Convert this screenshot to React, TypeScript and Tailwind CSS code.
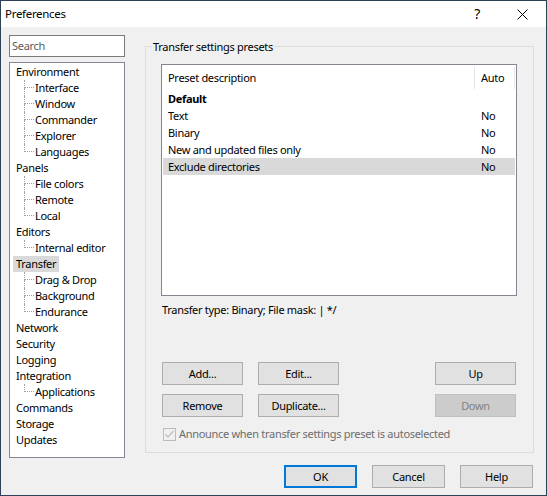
import type { ReactNode } from "react";

// Preferences dialog (WinSCP style) - Transfer page

type TreeNode = { label: string; children?: string[]; selected?: boolean };

const tree: TreeNode[] = [
  { label: "Environment", children: ["Interface", "Window", "Commander", "Explorer", "Languages"] },
  { label: "Panels", children: ["File colors", "Remote", "Local"] },
  { label: "Editors", children: ["Internal editor"] },
  { label: "Transfer", selected: true, children: ["Drag & Drop", "Background", "Endurance"] },
  { label: "Network" },
  { label: "Security" },
  { label: "Logging" },
  { label: "Integration", children: ["Applications"] },
  { label: "Commands" },
  { label: "Storage" },
  { label: "Updates" },
];

const presets = [
  { name: "Text", auto: "No" },
  { name: "Binary", auto: "No" },
  { name: "New and updated files only", auto: "No" },
  { name: "Exclude directories", auto: "No", selected: true },
];

function Button({ children, disabled, primary, className }: { children: ReactNode; disabled?: boolean; primary?: boolean; className?: string }) {
  let cls = "h-[23px] flex items-center justify-center border ";
  if (disabled) cls += "bg-[#cccccc] border-[#bfbfbf] text-[#838383]";
  else if (primary) cls += "bg-[#e1e1e1] border-2 border-[#0078d7] text-black";
  else cls += "bg-[#e1e1e1] border-[#adadad] text-black";
  return <div className={cls + " " + (className ?? "")}>{children}</div>;
}

function ChildRow({ label, last }: { label: string; last: boolean }) {
  return (
    <div className="flex h-4 items-center">
      <div className="w-[14px] shrink-0" />
      <div className="flex h-4 w-[10px] shrink-0 flex-col">
        <div className="h-[8px] border-b border-l border-dotted border-[#a0a0a0]" />
        <div className={"h-[8px] " + (last ? "" : "border-l border-dotted border-[#a0a0a0]")} />
      </div>
      <span className="ml-[1px] whitespace-nowrap">{label}</span>
    </div>
  );
}

export default function App() {
  return (
    <div className="flex h-[496px] w-[547px] flex-col border border-[#2b4257] bg-[#f0f0f0] font-['Noto_Sans',sans-serif] text-[11px] leading-4 tracking-[-0.3px] text-black">
      {/* title bar */}
      <div className="flex h-[26px] shrink-0 items-center bg-white">
        <span className="pl-[4px] text-[11.5px]">Preferences</span>
        <span className="ml-auto mr-[37px] text-[14px]">?</span>
        <svg width="11" height="11" viewBox="0 0 11 11" className="mr-[18px]">
          <path d="M0.5 0.5 L10.5 10.5 M10.5 0.5 L0.5 10.5" stroke="#000" strokeWidth="1" />
        </svg>
      </div>

      <div className="flex pl-[8px] pt-[8px]">
        {/* left column */}
        <div className="flex w-[116px] shrink-0 flex-col">
          <div className="flex h-[22px] items-center border border-[#7a7a7a] bg-white pl-[2px] text-[#5a5a5a]">Search</div>
          <div className="mt-[5px] h-[396px] border border-[#828790] bg-white pt-[1px]">
            {tree.map((n) => (
              <div key={n.label}>
                <div className="flex h-4 items-center pl-[3px]">
                  <span className={"px-[3px] " + (n.selected ? "bg-[#d9d9d9]" : "")}>{n.label}</span>
                </div>
                {n.children?.map((c, i) => (
                  <ChildRow key={c} label={c} last={i === n.children!.length - 1} />
                ))}
              </div>
            ))}
          </div>
        </div>

        {/* group box */}
        <div className="ml-[20px] mt-[11px] flex h-[407px] w-[389px] flex-col border border-[#dcdcdc]">
          <div className="-mt-[8px] ml-[6px] w-fit bg-[#f0f0f0] px-[1px]">Transfer settings presets</div>

          <div className="ml-[15px] mt-[9px] h-[232px] w-[356px] border border-[#828790] bg-white pl-[1px]">
            <div className="flex h-[25px] items-center">
              <div className="w-[311px] pl-[5px]">Preset description</div>
              <div className="h-[22px] w-px bg-[#e5e5e5]" />
              <div className="w-[39px] pl-[6px]">Auto</div>
              <div className="h-[22px] w-px bg-[#e5e5e5]" />
            </div>
            <div className="flex h-[17px] w-[352px] items-center pl-[5px] font-bold">Default</div>
            {presets.map((p) => (
              <div key={p.name} className={"flex h-[17px] w-[352px] items-center " + (p.selected ? "bg-[#d9d9d9]" : "")}>
                <div className="w-[312px] pl-[5px]">{p.name}</div>
                <div className="pl-[6px]">{p.auto}</div>
              </div>
            ))}
          </div>

          <div className="ml-[16px] mt-[6px]">Transfer type: Binary; File mask: | */</div>

          <div className="mt-[44px] flex pl-[16px] pr-[17px]">
            <Button className="w-[81px]">Add...</Button>
            <Button className="ml-[15px] w-[81px]">Edit...</Button>
            <Button className="ml-auto w-[81px]">Up</Button>
          </div>
          <div className="mt-[9px] flex pl-[16px] pr-[17px]">
            <Button className="w-[81px]">Remove</Button>
            <Button className="ml-[15px] w-[81px]">Duplicate...</Button>
            <Button className="ml-auto w-[81px]" disabled>Down</Button>
          </div>

          <div className="ml-[17px] mt-[9px] flex h-4 items-center text-[#6d6d6d]">
            <div className="flex h-[13px] w-[13px] items-center justify-center border border-[#bcbcbc]">
              <svg width="11" height="11" viewBox="0 0 11 11">
                <path d="M1.5 5.5 L4 8 L9.5 2" fill="none" stroke="#bcbcbc" strokeWidth="1.2" />
              </svg>
            </div>
            <span className="ml-[3px]">Announce when transfer settings preset is autoselected</span>
          </div>
        </div>
      </div>

      {/* dialog buttons */}
      <div className="mt-[7px] flex justify-end gap-[15px] pr-[13px]">
        <Button primary className="w-[73px]">OK</Button>
        <Button className="w-[73px]">Cancel</Button>
        <Button className="w-[73px]">Help</Button>
      </div>
    </div>
  );
}
